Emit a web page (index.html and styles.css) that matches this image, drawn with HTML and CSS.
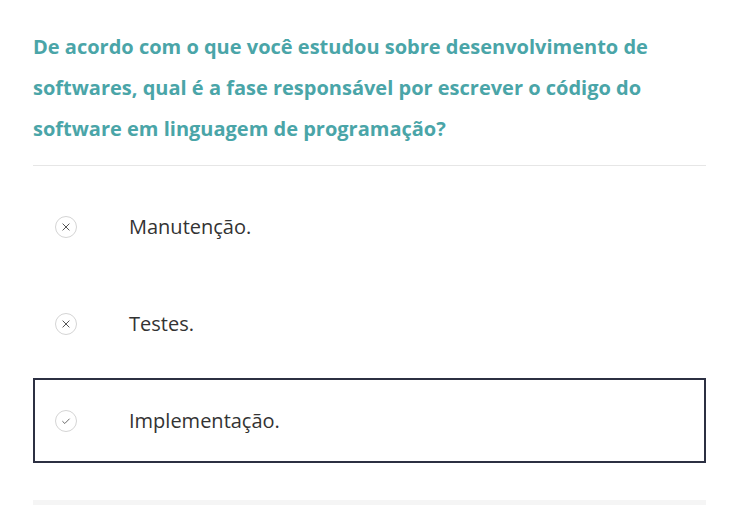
FILE: index.html
```html
<!DOCTYPE html>
<html lang="pt">
<head>
<meta charset="utf-8">
<link rel="stylesheet" href="styles.css">
</head>
<body>
<div class="page">
  <h2 class="question">De acordo com o que você estudou sobre desenvolvimento de softwares, qual é a fase responsável por escrever o código do software em linguagem de programação?</h2>
  <div class="divider"></div>
  <ul class="options">
    <li class="option">
      <span class="mark">
        <svg viewBox="0 0 22 22" width="22" height="22"><circle cx="11" cy="11" r="10.5" fill="#fff" stroke="#d4d4d4"/><path d="M7.6 7.6 L14.4 14.4 M14.4 7.6 L7.6 14.4" stroke="#555" stroke-width="1" fill="none"/></svg>
      </span>
      <span class="label">Manutenção.</span>
    </li>
    <li class="option">
      <span class="mark">
        <svg viewBox="0 0 22 22" width="22" height="22"><circle cx="11" cy="11" r="10.5" fill="#fff" stroke="#d4d4d4"/><path d="M7.6 7.6 L14.4 14.4 M14.4 7.6 L7.6 14.4" stroke="#555" stroke-width="1" fill="none"/></svg>
      </span>
      <span class="label">Testes.</span>
    </li>
    <li class="option selected">
      <span class="mark">
        <svg viewBox="0 0 22 22" width="22" height="22"><circle cx="11" cy="11" r="10.5" fill="#fff" stroke="#d4d4d4"/><path d="M7.4 11.2 L9.8 13.5 L14.6 8.7" stroke="#666" stroke-width="1" fill="none"/></svg>
      </span>
      <span class="label">Implementação.</span>
    </li>
  </ul>
  <div class="footer-strip"></div>
</div>
</body>
</html>
```
FILE: styles.css
```css
* { box-sizing: border-box; }
html, body { margin: 0; padding: 0; background: #fff; }
body { font-family: "Open Sans", "DejaVu Sans", sans-serif; }
.page {
  width: 673px;
  margin-left: 33px;
  padding-top: 26px;
}
.question {
  margin: 0;
  font-size: 20px;
  font-weight: 700;
  line-height: 41px;
  color: #4aa5a8;
}
.divider {
  height: 1px;
  background: #e6e6e6;
  margin-top: 16px;
}
.options {
  list-style: none;
  margin: 18px 0 0 0;
  padding: 0;
  display: flex;
  flex-direction: column;
  gap: 12px;
}
.option {
  height: 85px;
  display: flex;
  align-items: center;
  padding-left: 20px;
  border: 2px solid transparent;
}
.option.selected {
  border-color: #2c3042;
}
.mark {
  width: 22px;
  height: 22px;
  display: flex;
}
.label {
  margin-left: 52px;
  font-size: 20px;
  color: #333;
}
.footer-strip {
  margin-top: 37px;
  height: 12px;
  background: #f5f5f5;
}
```
